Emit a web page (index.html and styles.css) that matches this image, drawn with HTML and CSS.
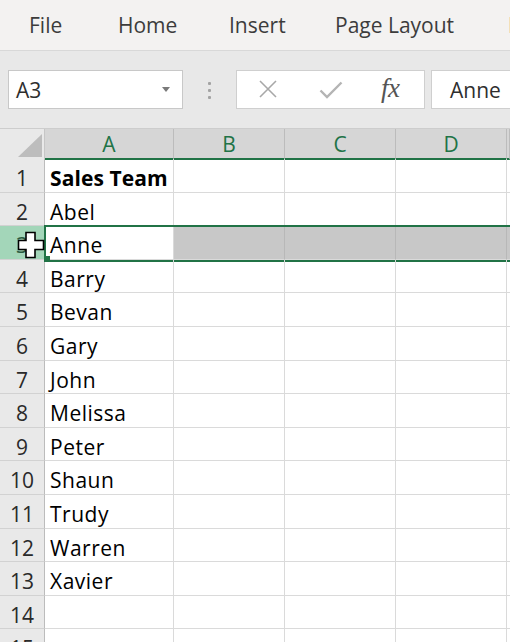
FILE: index.html
```html
<!DOCTYPE html>
<html>
<head>
<meta charset="utf-8">
<link rel="stylesheet" href="styles.css">
</head>
<body>
<div class="menu">
  <span class="tab t-file">File</span>
  <span class="tab t-home">Home</span>
  <span class="tab t-insert">Insert</span>
  <span class="tab t-layout">Page Layout</span>
  <span class="tab">Formulas</span>
</div>
<div class="fbar">
  <div class="namebox"><span>A3</span><svg class="dd" width="8" height="5" viewBox="0 0 8 5"><path d="M0 0H8L4 5Z" fill="#7a7a7a"/></svg></div>
  <div class="dots"><i></i><i></i><i></i></div>
  <div class="fxbox">
    <svg class="ic-x" width="20" height="20" viewBox="0 0 20 20"><path d="M2 2L18 18M18 2L2 18" stroke="#a8a8a8" stroke-width="1.6" fill="none"/></svg>
    <svg class="ic-ok" width="24" height="18" viewBox="0 0 24 18"><path d="M1.5 9.5L8 16L22.5 1.5" stroke="#b4b4b4" stroke-width="2.4" fill="none"/></svg>
    <span class="fx">fx</span>
  </div>
  <div class="content">Anne</div>
</div>
<div class="sheet">
  <div class="row head">
    <div class="corner"><svg width="45" height="30" viewBox="0 0 45 30"><path d="M42 5V28H18Z" fill="#bdbdbd"/></svg></div>
    <div class="ch">A</div><div class="ch">B</div><div class="ch">C</div><div class="ch">D</div><div class="ch"></div>
  </div>
  <div class="row"><div class="rh">1</div><div class="c b">Sales Team</div><div class="c"></div><div class="c"></div><div class="c"></div><div class="c"></div></div>
  <div class="row"><div class="rh">2</div><div class="c">Abel</div><div class="c"></div><div class="c"></div><div class="c"></div><div class="c"></div></div>
  <div class="row sel"><div class="rh">3</div><div class="c">Anne</div><div class="c g"></div><div class="c g"></div><div class="c g"></div><div class="c g"></div>
    <span class="handle"></span>
    <svg class="cursor" width="28" height="28" viewBox="0 0 28 28"><path d="M9 1.5H18V9.5H26.5V18.5H18V26.5H9V18.5H1.5V9.5H9Z" fill="#fff" stroke="#000" stroke-width="1.6"/></svg>
  </div>
  <div class="row"><div class="rh">4</div><div class="c">Barry</div><div class="c"></div><div class="c"></div><div class="c"></div><div class="c"></div></div>
  <div class="row"><div class="rh">5</div><div class="c">Bevan</div><div class="c"></div><div class="c"></div><div class="c"></div><div class="c"></div></div>
  <div class="row"><div class="rh">6</div><div class="c">Gary</div><div class="c"></div><div class="c"></div><div class="c"></div><div class="c"></div></div>
  <div class="row"><div class="rh">7</div><div class="c">John</div><div class="c"></div><div class="c"></div><div class="c"></div><div class="c"></div></div>
  <div class="row"><div class="rh">8</div><div class="c">Melissa</div><div class="c"></div><div class="c"></div><div class="c"></div><div class="c"></div></div>
  <div class="row"><div class="rh">9</div><div class="c">Peter</div><div class="c"></div><div class="c"></div><div class="c"></div><div class="c"></div></div>
  <div class="row"><div class="rh">10</div><div class="c">Shaun</div><div class="c"></div><div class="c"></div><div class="c"></div><div class="c"></div></div>
  <div class="row"><div class="rh">11</div><div class="c">Trudy</div><div class="c"></div><div class="c"></div><div class="c"></div><div class="c"></div></div>
  <div class="row"><div class="rh">12</div><div class="c">Warren</div><div class="c"></div><div class="c"></div><div class="c"></div><div class="c"></div></div>
  <div class="row"><div class="rh">13</div><div class="c">Xavier</div><div class="c"></div><div class="c"></div><div class="c"></div><div class="c"></div></div>
  <div class="row"><div class="rh">14</div><div class="c"></div><div class="c"></div><div class="c"></div><div class="c"></div><div class="c"></div></div>
  <div class="row"><div class="rh">15</div><div class="c"></div><div class="c"></div><div class="c"></div><div class="c"></div><div class="c"></div></div>
</div>
</body>
</html>
```
FILE: styles.css
```css
* { box-sizing: border-box; margin: 0; padding: 0; }
html, body { width: 510px; height: 642px; overflow: hidden; }
body { background: #fff; font-family: "Open Sans", "Noto Sans", sans-serif; }

.menu {
  height: 51px;
  background: #f3f2f1;
  border-bottom: 1px solid #d8d8d8;
  display: flex;
  align-items: center;
  padding-left: 29px;
  white-space: nowrap;
  overflow: hidden;
}
.tab { font-size: 21px; color: #3c3c3c; flex: none; }
.t-file { width: 89px; }
.t-home { width: 111px; }
.t-insert { width: 106px; }
.t-layout { width: 173px; }

.fbar {
  height: 77px;
  background: #e8e8e8;
  display: flex;
  align-items: flex-start;
  padding: 19px 0 0 8px;
  overflow: hidden;
}
.namebox {
  flex: none;
  width: 175px;
  height: 39px;
  background: #fff;
  border: 1px solid #c8c8c8;
  display: flex;
  align-items: center;
  justify-content: space-between;
  padding: 0 12px 0 7px;
  font-size: 21px;
  color: #2e2e2e;
}
.dd { display: block; }
.dots {
  flex: none;
  width: 53px;
  height: 39px;
  display: flex;
  flex-direction: column;
  align-items: center;
  justify-content: center;
  gap: 4px;
  padding-top: 1px;
}
.dots i { display: block; width: 3px; height: 3px; background: #a3a3a3; border-radius: 1px; }
.fxbox {
  flex: none;
  width: 189px;
  height: 39px;
  background: #fff;
  border: 1px solid #cfcfcf;
  display: flex;
  align-items: center;
  padding-left: 21px;
}
.ic-x { display: block; margin-top: -1px; }
.ic-ok { display: block; margin-left: 41px; margin-top: 1px; }
.fx {
  margin-left: 38px;
  font-family: "Liberation Serif", "DejaVu Serif", serif;
  font-style: italic;
  font-size: 27px;
  color: #555;
  letter-spacing: -0.5px;
  margin-top: -3px;
}
.content {
  flex: none;
  width: 120px;
  height: 39px;
  margin-left: 6px;
  background: #fff;
  border: 1px solid #cfcfcf;
  padding-left: 18px;
  display: flex;
  align-items: center;
  font-size: 21px;
  color: #2e2e2e;
}

.sheet { position: relative; border-top: 1px solid #cdcdcd; }
.row {
  display: grid;
  grid-template-columns: 45px 129px 111px 111px 111px 1fr;
  height: 33.6px;
  position: relative;
}
.row.head { height: 30px; background: #e8e8e8; }
.corner { background: #e9e9e9; border-right: 1px solid #c6c6c6; border-bottom: 1px solid #c6c6c6; }
.corner svg { display: block; }
.ch {
  background: #d6d6d6;
  border-right: 1px solid #bcbcbc;
  border-bottom: 2px solid #217346;
  text-align: center;
  font-size: 21px;
  line-height: 24px;
  padding-top: 3px;
  color: #217346;
}
.rh {
  background: #e9e9e9;
  border-right: 1px solid #bcbcbc;
  border-bottom: 1px solid #d2d2d2;
  text-align: center;
  font-size: 21px;
  line-height: 24px;
  padding-top: 7px;
  color: #2a2a2a;
}
.c {
  border-right: 1px solid #dadada;
  border-bottom: 1px solid #dadada;
  font-size: 21px;
  line-height: 24px;
  padding: 7px 0 0 5px;
  color: #000;
  letter-spacing: 0.5px;
  white-space: nowrap;
}
.c.b { font-weight: 700; letter-spacing: 0.1px; }
.c.g { background: #c8c8c8; border-right-color: #b8b8b8; }
.sel .rh { background: #a3d6b9; color: #2b5b40; }
.sel::after {
  content: "";
  position: absolute;
  left: 44px;
  right: -4px;
  top: -1px;
  bottom: -2px;
  border: 2px solid #217346;
  pointer-events: none;
}
.handle {
  position: absolute;
  left: 44px;
  bottom: -2px;
  width: 6px;
  height: 6px;
  background: #217346;
  z-index: 2;
}
.cursor { position: absolute; left: 17px; top: 5px; z-index: 3; }
```
